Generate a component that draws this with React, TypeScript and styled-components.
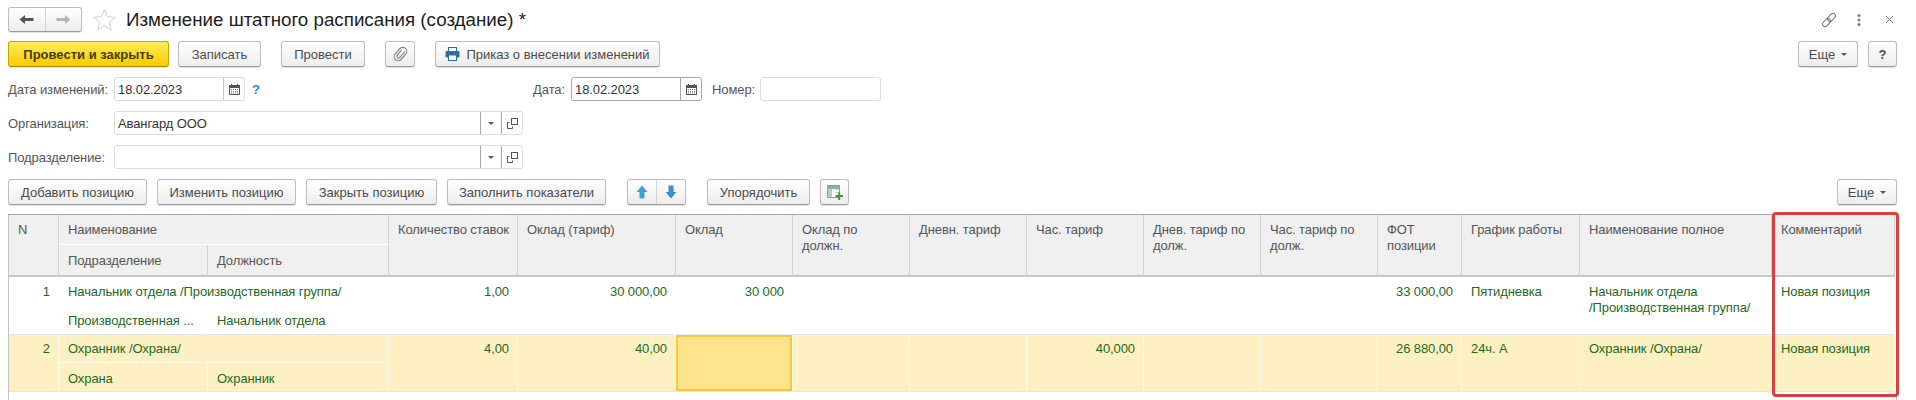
import { FC } from 'react';
import styled, { createGlobalStyle } from 'styled-components';

const GlobalStyle = createGlobalStyle`
  html, body {
    margin: 0;
    background: #ffffff;
  }
  * {
    box-sizing: border-box;
  }
`;

const Page = styled.div`
  width: 1916px;
  height: 400px;
  overflow: hidden;
  padding: 7px 19px 0 8px;
  font-family: 'Liberation Sans', Arial, sans-serif;
  font-size: 13px;
  letter-spacing: -0.1px;
  color: #4b4b4b;
  display: flex;
  flex-direction: column;
`;

const Row = styled.div<{ $mt?: number; $h: number }>`
  display: flex;
  align-items: center;
  height: ${(p) => p.$h}px;
  margin-top: ${(p) => p.$mt ?? 0}px;
`;

const Spacer = styled.div`
  flex: 1;
`;

const Group = styled.div`
  display: flex;
  height: 100%;
  border: 1px solid #bdbdbd;
  border-bottom-color: #9a9a9a;
  border-radius: 3px;
  background: linear-gradient(#ffffff, #ededed);
  box-shadow: 0 1px 1px rgba(0, 0, 0, 0.12);
`;

const NavGroup = styled(Group)<{ $w: number; $ml?: number }>`
  width: ${(p) => p.$w}px;
  margin-left: ${(p) => p.$ml ?? 0}px;
`;

const NavPart = styled.div`
  flex: 1;
  display: flex;
  align-items: center;
  justify-content: center;
  & + & {
    border-left: 1px solid #d2d2d2;
  }
`;

const Title = styled.h1`
  margin: 0 0 0 10px;
  font-size: 18.75px;
  font-weight: 400;
  letter-spacing: 0;
  color: #1c1c1c;
  white-space: nowrap;
`;

const StarWrap = styled.div`
  margin-left: 11px;
  display: flex;
`;

const TopIcon = styled.div<{ $ml: number }>`
  display: flex;
  margin-left: ${(p) => p.$ml}px;
`;

const Button = styled.button<{ $w: number; $ml?: number; $primary?: boolean }>`
  width: ${(p) => p.$w}px;
  height: 100%;
  margin-left: ${(p) => p.$ml ?? 0}px;
  padding: 0;
  display: flex;
  align-items: center;
  justify-content: center;
  gap: 6px;
  font-family: inherit;
  font-size: 13px;
  font-weight: ${(p) => (p.$primary ? 700 : 400)};
  white-space: nowrap;
  color: ${(p) => (p.$primary ? '#4a3c00' : '#4b4b4b')};
  border: 1px solid ${(p) => (p.$primary ? '#c7a500' : '#bdbdbd')};
  border-bottom-color: ${(p) => (p.$primary ? '#a88c00' : '#9a9a9a')};
  border-radius: 3px;
  background: ${(p) =>
    p.$primary
      ? 'linear-gradient(#ffec5c, #f6cb00)'
      : 'linear-gradient(#ffffff, #ededed)'};
  box-shadow: 0 1px 1px rgba(0, 0, 0, 0.12);
`;

const Caret = styled.span`
  display: inline-block;
  width: 0;
  height: 0;
  border-left: 3px solid transparent;
  border-right: 3px solid transparent;
  border-top: 3px solid #555555;
`;

const Label = styled.label<{ $w?: number; $ml?: number; $right?: boolean }>`
  width: ${(p) => (p.$w ? `${p.$w}px` : 'auto')};
  margin-left: ${(p) => p.$ml ?? 0}px;
  text-align: ${(p) => (p.$right ? 'right' : 'left')};
  white-space: nowrap;
  color: #555555;
`;

const Field = styled.div<{ $w: number; $ml?: number; $strong?: boolean }>`
  width: ${(p) => p.$w}px;
  height: 100%;
  margin-left: ${(p) => p.$ml ?? 0}px;
  display: flex;
  align-items: stretch;
  border: 1px solid ${(p) => (p.$strong ? '#a9a9a9' : '#dcdcdc')};
  border-radius: 3px;
  background: #ffffff;
`;

const FieldValue = styled.div`
  flex: 1;
  padding-left: 3px;
  display: flex;
  align-items: center;
  color: #333333;
`;

const FieldButton = styled.div<{ $strong?: boolean }>`
  width: 21px;
  display: flex;
  align-items: center;
  justify-content: center;
  border-left: 1px solid ${(p) => (p.$strong ? '#a9a9a9' : '#c8c8c8')};
`;

const Hint = styled.span`
  width: 26px;
  padding-left: 7px;
  font-weight: 700;
  color: #2c8ac9;
`;

const TableWrap = styled.div`
  position: relative;
  margin-top: 9px;
  height: 186px;
  border-left: 1px solid #c4c4c4;
  border-right: 1px solid #c4c4c4;
  border-top: 1px solid #a9a9a9;
`;

const Grid = styled.div`
  display: grid;
  grid-template-columns: 50px 149px 181px 129px 158px 117px 117px 117px 117px 117px 117px 84px 118px 192px 123px;
  grid-template-rows: 30px 32px 29px 29px 28px 29px;
`;

const HeadCell = styled.div<{ $span?: number; $rows?: number; $sub?: boolean }>`
  grid-column: span ${(p) => p.$span ?? 1};
  grid-row: span ${(p) => p.$rows ?? 1};
  padding: ${(p) => (p.$sub ? 8 : 7)}px 4px 0 9px;
  line-height: 16px;
  white-space: pre-line;
  background: #f0f0f0;
  border-right: 1px solid #d4d4d4;
  border-bottom: ${(p) => (p.$rows === 2 || p.$sub ? '2px solid #c8c8c8' : '1px solid #ffffff')};
  color: #555555;
`;

const Cell = styled.div<{
  $span?: number;
  $rows?: number;
  $right?: boolean;
  $selected?: boolean;
  $sub?: boolean;
  $active?: boolean;
  $nowrap?: boolean;
}>`
  grid-column: span ${(p) => p.$span ?? 1};
  grid-row: span ${(p) => p.$rows ?? 1};
  padding: ${(p) => (p.$selected ? (p.$sub ? 8 : 6) : 7)}px 8px 0 9px;
  line-height: 16px;
  text-align: ${(p) => (p.$right ? 'right' : 'left')};
  white-space: ${(p) => (p.$nowrap ? 'nowrap' : 'normal')};
  overflow: hidden;
  color: #1d6a1d;
  background: ${(p) => (p.$active ? '#fde48c' : p.$selected ? '#fdf1c4' : '#ffffff')};
  border-right: 1px solid ${(p) => (p.$selected ? '#fff9e4' : '#ffffff')};
  border-bottom: 1px solid
    ${(p) => {
      if (p.$selected) return p.$rows === 2 || p.$sub ? '#e6e6e6' : '#fff9e4';
      return p.$rows === 2 || p.$sub ? '#e6e6e6' : '#ffffff';
    }};
  box-shadow: ${(p) => (p.$active ? 'inset 0 0 0 2px #f1ca3e' : 'none')};
`;

const Highlight = styled.div`
  position: absolute;
  top: -3px;
  left: 1763px;
  width: 127px;
  height: 185px;
  border: 3px solid #d8413f;
  border-radius: 4px;
  pointer-events: none;
`;

const ArrowLeft: FC<{ color: string }> = ({ color }) => (
  <svg width="15" height="11" viewBox="0 0 15 11">
    <path d="M0.5 5.5 6 1v3h8.5v3H6v3z" fill={color} />
  </svg>
);

const ArrowRight: FC<{ color: string }> = ({ color }) => (
  <svg width="15" height="11" viewBox="0 0 15 11">
    <path d="M14.5 5.5 9 1v3H0.5v3H9v3z" fill={color} />
  </svg>
);

const Star = () => (
  <svg width="23" height="23" viewBox="0 0 23 23">
    <path
      d="M11.5 1.5l3 7.2 7.8.6-6 5.1 1.900 7.600-6.700-4.100-6.700 4.100 1.900-7.600-6-5.100 7.800-.6z"
      fill="#ffffff"
      stroke="#cfcfcf"
    />
  </svg>
);

const LinkIcon = () => (
  <svg width="16" height="16" viewBox="0 0 16 16" fill="none" stroke="#6f6f6f" strokeWidth="1">
    <rect x="0.500" y="5.500" width="9" height="5" rx="2.500" transform="rotate(-45 5 8) translate(-1.500 2.200)" />
    <rect x="6.500" y="5.500" width="9" height="5" rx="2.500" transform="rotate(-45 11 8) translate(1.500 -2.200)" />
  </svg>
);

const DotsIcon = () => (
  <svg width="4" height="12" viewBox="0 0 4 12" fill="#7d7d7d">
    <circle cx="2" cy="1.500" r="1.500" />
    <circle cx="2" cy="6" r="1.500" />
    <circle cx="2" cy="10.500" r="1.500" />
  </svg>
);

const CloseIcon = () => (
  <svg width="9" height="9" viewBox="0 0 9 9" stroke="#777777" strokeWidth="1">
    <path d="M1 1l7 7M8 1l-7 7" />
  </svg>
);

const ClipIcon = () => (
  <svg width="15" height="16" viewBox="0 0 15 16" fill="none" stroke="#8b8b8b" strokeWidth="1.200">
    <g transform="rotate(40 7.500 8)">
      <rect x="3.500" y="0.500" width="8" height="15" rx="4" />
      <path d="M5.800 4v7a1.700 1.700 0 0 0 3.400 0V3" />
    </g>
  </svg>
);

const PrinterIcon = () => (
  <svg width="15" height="14" viewBox="0 0 15 14">
    <rect x="3.500" y="0.500" width="8" height="4" fill="#ffffff" stroke="#2f6d9e" />
    <rect x="0.500" y="4" width="14" height="6.500" rx="1" fill="#2f6d9e" />
    <rect x="3.500" y="8" width="8" height="5.500" fill="#ffffff" stroke="#2f6d9e" />
  </svg>
);

const CalendarIcon = () => (
  <svg width="11" height="11" viewBox="0 0 11 11">
    <rect x="0.500" y="1.500" width="10" height="9" fill="#ffffff" stroke="#555555" />
    <rect x="0.500" y="1.500" width="10" height="2.500" fill="#555555" />
    <path d="M2.500 0v2M8.500 0v2" stroke="#555555" />
    <path d="M2 5.500h7M2 7.500h7M2 9h7" stroke="#777777" strokeDasharray="1 1" />
  </svg>
);

const OpenIcon = () => (
  <svg width="11" height="11" viewBox="0 0 11 11" fill="none" stroke="#555555">
    <rect x="4.500" y="0.500" width="6" height="6" />
    <path d="M2.500 4.500H0.500v6h5V8.500" />
  </svg>
);

const ArrowUp = () => (
  <svg width="12" height="14" viewBox="0 0 12 14">
    <path d="M6 0.500l5.500 6.500H8.500v6.500h-5V7H0.500z" fill="#3f9fd8" />
  </svg>
);

const ArrowDown = () => (
  <svg width="12" height="14" viewBox="0 0 12 14">
    <path d="M6 13.500l5.500-6.500H8.500V0.500h-5V7H0.500z" fill="#3f8ecb" />
  </svg>
);

const AddColumnIcon = () => (
  <svg width="16" height="15" viewBox="0 0 16 15">
    <rect x="0.500" y="0.500" width="12" height="12" fill="#ffffff" stroke="#9a9a9a" />
    <rect x="1" y="1" width="11" height="3" fill="#8fae9f" />
    <rect x="1" y="4" width="4" height="8" fill="#b3d3c2" />
    <path d="M8.500 4.500h3M8.500 7.500h3" stroke="#c5c5c5" />
    <path d="M8.500 11h7.500M12.200 7.500v7.500" stroke="#3e9a2c" strokeWidth="2" />
  </svg>
);

const DropField: FC<{ value?: string }> = ({ value }) => (
  <Field $w={409}>
    <FieldValue>{value}</FieldValue>
    <FieldButton $strong>
      <Caret />
    </FieldButton>
    <FieldButton $strong>
      <OpenIcon />
    </FieldButton>
  </Field>
);

const heads = [
  'Оклад',
  'Оклад по\nдолжн.',
  'Дневн. тариф',
  'Час. тариф',
  'Днев. тариф по\nдолж.',
  'Час. тариф по\nдолж.',
  'ФОТ\nпозиции',
  'График работы',
  'Наименование полное',
  'Комментарий',
];

export default function App() {
  return (
    <>
      <GlobalStyle />
      <Page>
        <Row $h={25}>
          <NavGroup $w={74}>
            <NavPart>
              <ArrowLeft color="#555555" />
            </NavPart>
            <NavPart>
              <ArrowRight color="#b4b4b4" />
            </NavPart>
          </NavGroup>
          <StarWrap>
            <Star />
          </StarWrap>
          <Title>Изменение штатного расписания (создание) *</Title>
          <Spacer />
          <LinkIcon />
          <TopIcon $ml={20}>
            <DotsIcon />
          </TopIcon>
          <TopIcon $ml={24}>
            <CloseIcon />
          </TopIcon>
          <TopIcon $ml={3} />
        </Row>

        <Row $h={26} $mt={9}>
          <Button $w={161} $primary>
            Провести и закрыть
          </Button>
          <Button $w={83} $ml={9}>
            Записать
          </Button>
          <Button $w={84} $ml={20}>
            Провести
          </Button>
          <Button $w={30} $ml={20}>
            <ClipIcon />
          </Button>
          <Button $w={225} $ml={20}>
            <PrinterIcon />
            Приказ о внесении изменений
          </Button>
          <Spacer />
          <Button $w={60}>
            Еще
            <Caret />
          </Button>
          <Button $w={29} $ml={10}>
            <b>?</b>
          </Button>
        </Row>

        <Row $h={24} $mt={10}>
          <Label $w={106}>Дата изменений:</Label>
          <Field $w={131}>
            <FieldValue>18.02.2023</FieldValue>
            <FieldButton>
              <CalendarIcon />
            </FieldButton>
          </Field>
          <Hint>?</Hint>
          <Label $w={294} $right>
            Дата:
          </Label>
          <Field $w={131} $ml={6} $strong>
            <FieldValue>18.02.2023</FieldValue>
            <FieldButton $strong>
              <CalendarIcon />
            </FieldButton>
          </Field>
          <Label $w={42} $ml={10}>
            Номер:
          </Label>
          <Field $w={121} $ml={6} />
        </Row>

        <Row $h={24} $mt={10}>
          <Label $w={106}>Организация:</Label>
          <DropField value="Авангард ООО" />
        </Row>

        <Row $h={24} $mt={10}>
          <Label $w={106}>Подразделение:</Label>
          <DropField />
        </Row>

        <Row $h={26} $mt={10}>
          <Button $w={139}>Добавить позицию</Button>
          <Button $w={139} $ml={10}>
            Изменить позицию
          </Button>
          <Button $w={131} $ml={10}>
            Закрыть позицию
          </Button>
          <Button $w={159} $ml={10}>
            Заполнить показатели
          </Button>
          <NavGroup $w={59} $ml={21}>
            <NavPart>
              <ArrowUp />
            </NavPart>
            <NavPart>
              <ArrowDown />
            </NavPart>
          </NavGroup>
          <Button $w={103} $ml={21}>
            Упорядочить
          </Button>
          <Button $w={29} $ml={10}>
            <AddColumnIcon />
          </Button>
          <Spacer />
          <Button $w={60}>
            Еще
            <Caret />
          </Button>
        </Row>

        <TableWrap>
          <Grid>
            <HeadCell $rows={2}>N</HeadCell>
            <HeadCell $span={2}>Наименование</HeadCell>
            <HeadCell $rows={2}>Количество ставок</HeadCell>
            <HeadCell $rows={2}>Оклад (тариф)</HeadCell>
            {heads.map((h) => (
              <HeadCell key={h} $rows={2}>
                {h}
              </HeadCell>
            ))}
            <HeadCell $sub>Подразделение</HeadCell>
            <HeadCell $sub>Должность</HeadCell>

            <Cell $rows={2} $right>
              1
            </Cell>
            <Cell $span={2}>Начальник отдела /Производственная группа/</Cell>
            <Cell $rows={2} $right>
              1,00
            </Cell>
            <Cell $rows={2} $right>
              30 000,00
            </Cell>
            <Cell $rows={2} $right>
              30 000
            </Cell>
            <Cell $rows={2} />
            <Cell $rows={2} />
            <Cell $rows={2} />
            <Cell $rows={2} />
            <Cell $rows={2} />
            <Cell $rows={2} $right>
              33 000,00
            </Cell>
            <Cell $rows={2}>Пятидневка</Cell>
            <Cell $rows={2}>
              Начальник отдела
              <br />
              /Производственная группа/
            </Cell>
            <Cell $rows={2}>Новая позиция</Cell>
            <Cell $sub $nowrap>
              Производственная ...
            </Cell>
            <Cell $sub $nowrap>
              Начальник отдела
            </Cell>

            <Cell $rows={2} $right $selected>
              2
            </Cell>
            <Cell $span={2} $selected>
              Охранник /Охрана/
            </Cell>
            <Cell $rows={2} $right $selected>
              4,00
            </Cell>
            <Cell $rows={2} $right $selected>
              40,00
            </Cell>
            <Cell $rows={2} $selected $active />
            <Cell $rows={2} $selected />
            <Cell $rows={2} $selected />
            <Cell $rows={2} $right $selected>
              40,000
            </Cell>
            <Cell $rows={2} $selected />
            <Cell $rows={2} $selected />
            <Cell $rows={2} $right $selected>
              26 880,00
            </Cell>
            <Cell $rows={2} $selected>
              24ч. А
            </Cell>
            <Cell $rows={2} $selected>
              Охранник /Охрана/
            </Cell>
            <Cell $rows={2} $selected>
              Новая позиция
            </Cell>
            <Cell $sub $selected>
              Охрана
            </Cell>
            <Cell $sub $selected>
              Охранник
            </Cell>
          </Grid>
          <Highlight />
        </TableWrap>
      </Page>
    </>
  );
}
